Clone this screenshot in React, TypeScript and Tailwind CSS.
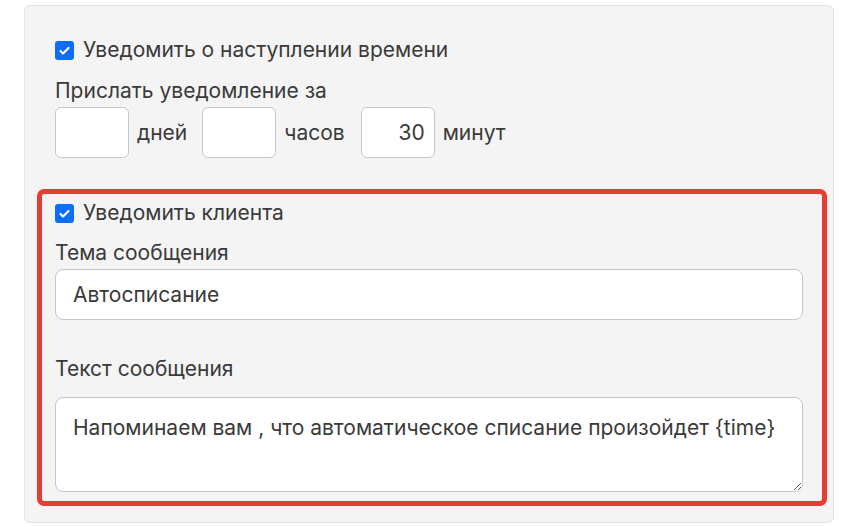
import React from "react";

function Check() {
  return (
    <span className="flex h-[19px] w-[19px] shrink-0 items-center justify-center rounded-[3px] bg-[#0d6efd]">
      <svg width="13" height="13" viewBox="0 0 16 16" fill="none">
        <path d="M3 8.5l3.2 3.2L13 4.8" stroke="#fff" strokeWidth="2.6" strokeLinecap="round" strokeLinejoin="round" />
      </svg>
    </span>
  );
}

function Box({ value = "" }: { value?: string }) {
  return (
    <div className="flex h-[51px] w-[74px] items-center justify-end rounded-[6px] border border-[#c6c6cf] bg-white pr-[9px]">
      {value}
    </div>
  );
}

export default function App() {
  return (
    <div
      className="h-[527px] w-[861px] bg-white pl-[24px] pt-[5px] text-[21px] text-[#3a3a3a]"
      style={{ fontFamily: "Inter, 'Noto Sans', sans-serif" }}
    >
      <div className="h-[518px] w-[810px] rounded-[6px] border border-[#e3e3e3] bg-[#f4f4f4] pl-[12px]">
        <div className="pl-[18px]">
          <div className="mt-[32px] flex h-[24px] items-center gap-[9px]">
            <Check />
            <span>Уведомить о наступлении времени</span>
          </div>
          <div className="mt-[17px] flex h-[24px] items-center">Прислать уведомление за</div>
          <div className="mt-[4px] flex items-center">
            <Box />
            <span className="ml-[8px] mr-[15px]">дней</span>
            <Box />
            <span className="ml-[8px] mr-[16px]">часов</span>
            <Box value="30" />
            <span className="ml-[8px]">минут</span>
          </div>
        </div>
        <div className="mt-[31px] w-[790px] rounded-[7px] border-[5px] border-[#e53d32] pb-[9px] pl-[13px] pt-[7px]">
          <div className="flex h-[24px] items-center gap-[9px]">
            <Check />
            <span>Уведомить клиента</span>
          </div>
          <div className="mt-[16px] flex h-[24px] items-center">Тема сообщения</div>
          <div className="mt-[4px] flex h-[51px] w-[748px] items-center rounded-[8px] border border-[#c6c6cf] bg-white pl-[17px]">
            Автосписание
          </div>
          <div className="mt-[37px] flex h-[24px] items-center">Текст сообщения</div>
          <textarea
            readOnly
            defaultValue="Напоминаем вам , что автоматическое списание произойдет {time}"
            className="mt-[16px] block h-[95px] w-[748px] resize rounded-[8px] border border-[#c6c6cf] bg-white pl-[17px] pt-[16px] text-[21px] leading-[28px] text-[#3a3a3a] outline-none"
            style={{ fontFamily: "Inter, 'Noto Sans', sans-serif" }}
          />
        </div>
      </div>
    </div>
  );
}
